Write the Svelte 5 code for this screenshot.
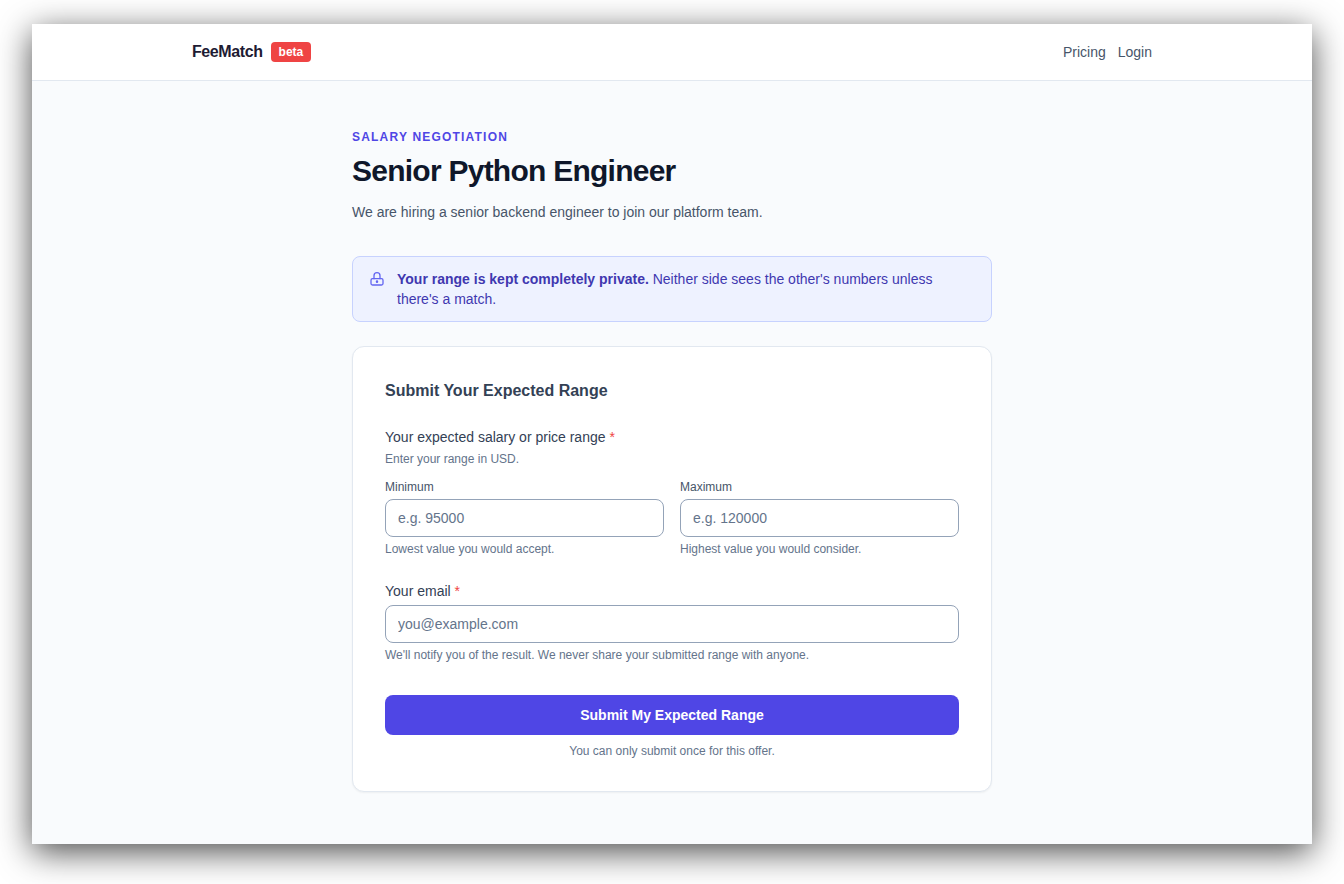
<script>
    const note = "Neither side sees the other's numbers unless there's a match.";
</script>

<div class="window">
    <header class="topbar">
        <div class="topbar-inner">
            <div class="brand">
                <span class="logo">FeeMatch</span>
                <span class="badge">beta</span>
            </div>
            <nav class="links">
                <a href="#pricing">Pricing</a>
                <a href="#login">Login</a>
            </nav>
        </div>
    </header>

    <main class="content">
        <p class="eyebrow">SALARY NEGOTIATION</p>
        <h1>Senior Python Engineer</h1>
        <p class="lead">We are hiring a senior backend engineer to join our platform team.</p>

        <div class="notice">
            <svg class="lock" viewBox="0 0 24 24" fill="none" stroke="currentColor" stroke-width="1.75" stroke-linecap="round" stroke-linejoin="round">
                <rect x="4" y="11.5" width="16" height="8.5" rx="2"></rect>
                <path d="M8 11.5V7.5a4 4 0 0 1 8 0v4"></path>
                <circle cx="12" cy="15.5" r="0.8" fill="currentColor"></circle>
            </svg>
            <p><strong>Your range is kept completely private.</strong> {note}</p>
        </div>

        <form class="card" onsubmit={(e) => e.preventDefault()}>
            <h2>Submit Your Expected Range</h2>

            <div class="field-label">Your expected salary or price range <span class="req">*</span></div>
            <div class="hint top">Enter your range in USD.</div>

            <div class="pair">
                <div>
                    <label for="min">Minimum</label>
                    <input id="min" type="text" placeholder="e.g. 95000" />
                    <div class="hint">Lowest value you would accept.</div>
                </div>
                <div>
                    <label for="max">Maximum</label>
                    <input id="max" type="text" placeholder="e.g. 120000" />
                    <div class="hint">Highest value you would consider.</div>
                </div>
            </div>

            <div class="field-label email">Your email <span class="req">*</span></div>
            <input type="text" placeholder="you@example.com" />
            <div class="hint">We'll notify you of the result. We never share your submitted range with anyone.</div>

            <button type="submit">Submit My Expected Range</button>
            <div class="once">You can only submit once for this offer.</div>
        </form>
    </main>
</div>

<style>
    :global(body) {
        margin: 0;
        background: #fff;
        font-family: "Liberation Sans", Arial, sans-serif;
    }

    .window {
        width: 1280px;
        height: 820px;
        margin: 24px 32px 40px;
        background: #f9fbfd;
        box-shadow: 0 8px 32px rgba(0, 0, 0, 0.7);
        overflow: hidden;
    }

    .topbar {
        background: #fff;
        border-bottom: 1px solid #e2e8f0;
        height: 56px;
    }

    .topbar-inner {
        width: 960px;
        height: 100%;
        margin: 0 auto;
        display: flex;
        align-items: center;
        justify-content: space-between;
    }

    .brand {
        display: flex;
        align-items: center;
        gap: 8px;
    }

    .logo {
        font-size: 16px;
        font-weight: 700;
        letter-spacing: -0.4px;
        color: #1e1b33;
    }

    .badge {
        background: #ef4444;
        color: #fff;
        font-size: 12px;
        font-weight: 700;
        line-height: 16px;
        padding: 2px 8px;
        border-radius: 4px;
    }

    .links {
        display: flex;
        gap: 12px;
    }

    .links a {
        color: #475569;
        font-size: 14px;
        text-decoration: none;
    }

    .content {
        width: 640px;
        margin: 0 auto;
        padding-top: 48px;
    }

    .eyebrow {
        margin: 0 0 8px;
        color: #4f46e5;
        font-size: 12px;
        font-weight: 700;
        line-height: 16px;
        letter-spacing: 1.2px;
    }

    h1 {
        margin: 0 0 12px;
        color: #0f172a;
        font-size: 30px;
        font-weight: 700;
        line-height: 36px;
        letter-spacing: -0.75px;
    }

    .lead {
        margin: 0 0 32px;
        color: #475569;
        font-size: 14px;
        line-height: 23px;
    }

    .notice {
        display: flex;
        gap: 12px;
        padding: 12px 16px;
        background: #eef2ff;
        border: 1px solid #c7d2fe;
        border-radius: 8px;
        color: #3f38b0;
        margin-bottom: 24px;
    }

    .notice p {
        margin: 0;
        font-size: 14px;
        line-height: 20px;
    }

    .lock {
        width: 18px;
        height: 18px;
        flex: none;
        margin: 1px -1px 0 -1px;
        color: #6366f1;
    }

    .card {
        background: #fff;
        border: 1px solid #e2e8f0;
        border-radius: 12px;
        box-shadow: 0 1px 2px rgba(0, 0, 0, 0.05);
        padding: 32px;
    }

    h2 {
        margin: 0 0 24px;
        color: #334155;
        font-size: 16px;
        font-weight: 700;
        line-height: 24px;
    }

    .field-label {
        color: #334155;
        font-size: 14px;
        line-height: 20px;
        margin-bottom: 4px;
    }

    .field-label.email {
        margin-top: 24px;
    }

    .req {
        color: #ef4444;
    }

    .hint {
        color: #64748b;
        font-size: 12px;
        line-height: 16px;
        margin-top: 4px;
    }

    .hint.top {
        margin-top: 0;
        margin-bottom: 12px;
    }

    .pair {
        display: grid;
        grid-template-columns: 1fr 1fr;
        gap: 16px;
    }

    label {
        display: block;
        color: #475569;
        font-size: 12px;
        line-height: 16px;
        margin-bottom: 4px;
    }

    input {
        display: block;
        width: 100%;
        height: 38px;
        box-sizing: border-box;
        padding: 0 12px;
        background: #fff;
        border: 1px solid #94a3b8;
        border-radius: 8px;
        font-family: inherit;
        font-size: 14px;
        color: #0f172a;
        outline: none;
    }

    input::placeholder {
        color: #64748b;
        opacity: 1;
    }

    button {
        display: block;
        width: 100%;
        height: 40px;
        margin-top: 32px;
        background: #4f46e5;
        color: #fff;
        border: none;
        border-radius: 8px;
        font-family: inherit;
        font-size: 14px;
        font-weight: 700;
    }

    .once {
        margin-top: 8px;
        text-align: center;
        color: #64748b;
        font-size: 12px;
        line-height: 16px;
    }
</style>
